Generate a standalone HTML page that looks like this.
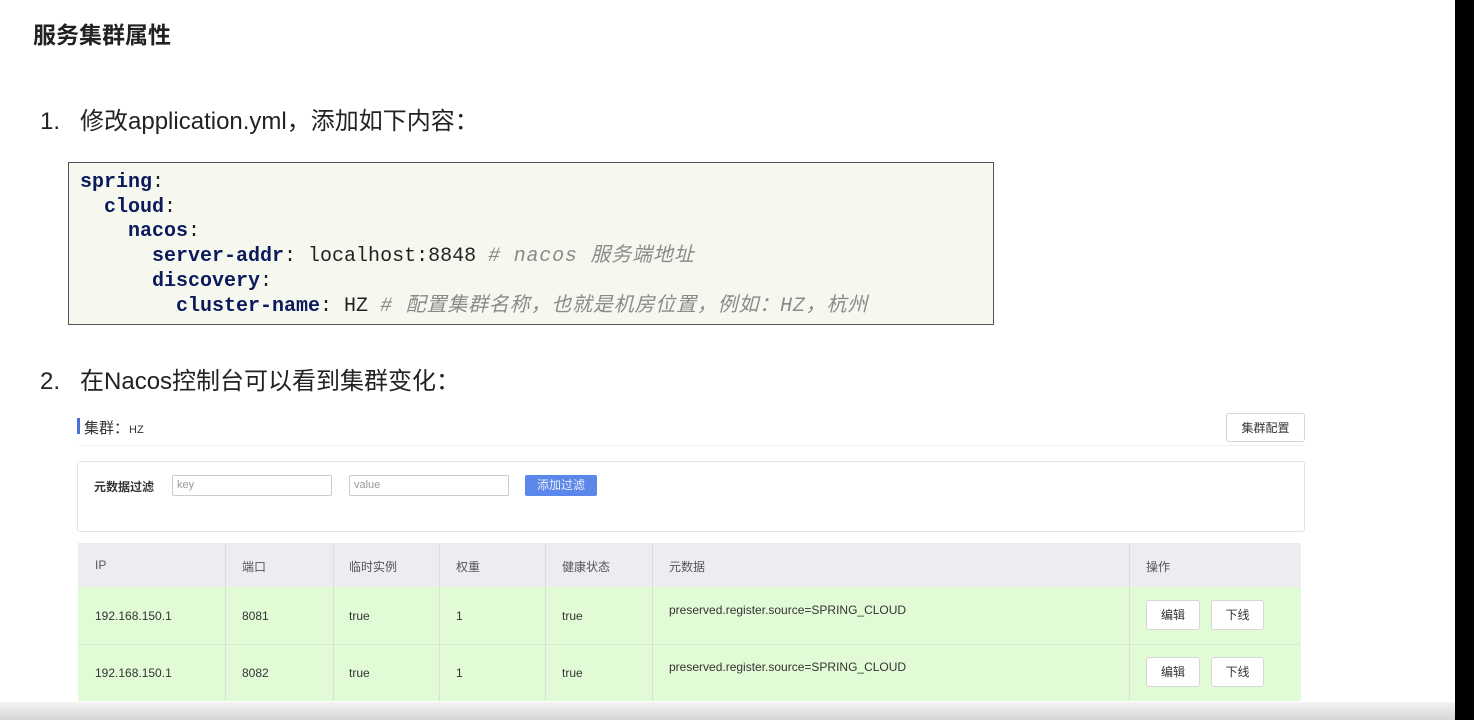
<!DOCTYPE html>
<html><head><meta charset="utf-8"><style>
*{margin:0;padding:0;box-sizing:border-box}
body{width:1474px;height:720px;background:#fff;position:relative;overflow:hidden;font-family:"Liberation Sans","Noto Sans CJK SC",sans-serif;color:#222}
.a{position:absolute;white-space:nowrap}
.code{position:absolute;left:68px;top:162px;width:926px;height:163px;background:#f6f8ef;border:1px solid #555}
.code div{position:absolute;left:11px;height:24px;line-height:24px;font-family:"Liberation Mono","Noto Sans CJK SC",monospace;font-size:20px;color:#222;white-space:pre}
.k{color:#0b1a5c;font-weight:bold}
.c{color:#8a8a8a;font-style:italic;font-size:20px;letter-spacing:0.8px}
.cell{position:absolute;font-size:12px;color:#333}
.btn{position:absolute;background:#fff;border:1px solid #d6d6d6;border-radius:3px;font-size:12px;color:#333;text-align:center}
</style></head><body>
<div class="a" style="left:33px;top:16px;font-size:23px;font-weight:bold;color:#222">服务集群属性</div>
<div class="a" style="left:40px;top:101px;font-size:24px;color:#222">1.&nbsp;&nbsp;&nbsp;修改application.yml，添加如下内容：</div>
<div class="code">
<div style="top:8px"><span class="k">spring</span>:</div>
<div style="top:33px">  <span class="k">cloud</span>:</div>
<div style="top:57px">    <span class="k">nacos</span>:</div>
<div style="top:82px">      <span class="k">server-addr</span>: localhost:8848 <span class="c"># nacos 服务端地址</span></div>
<div style="top:107px">      <span class="k">discovery</span>:</div>
<div style="top:132px">        <span class="k">cluster-name</span>: HZ <span class="c"># 配置集群名称，也就是机房位置，例如：HZ，杭州</span></div>
</div>
<div class="a" style="left:40px;top:361px;font-size:24px;color:#222">2.&nbsp;&nbsp;&nbsp;在Nacos控制台可以看到集群变化：</div>

<div class="a" style="left:77px;top:418px;width:3px;height:16px;background:#4a6fd8"></div>
<div class="a" style="left:84px;top:417px;font-size:15px;color:#333">集群：<span style="font-size:11px">HZ</span></div>
<div class="a" style="left:78px;top:445px;width:1226px;height:1px;background:#f0f0f0"></div>
<div class="btn" style="left:1226px;top:413px;width:79px;height:29px;line-height:28px">集群配置</div>

<div class="a" style="left:77px;top:461px;width:1228px;height:71px;border:1px solid #e3e3e3;border-radius:3px"></div>
<div class="a" style="left:94px;top:478px;font-size:12px;font-weight:bold;color:#333">元数据过滤</div>
<div class="a" style="left:172px;top:475px;width:160px;height:21px;border:1px solid #ccc;border-radius:2px;font-size:11px;color:#999;padding:3px 4px">key</div>
<div class="a" style="left:349px;top:475px;width:160px;height:21px;border:1px solid #ccc;border-radius:2px;font-size:11px;color:#999;padding:3px 4px">value</div>
<div class="a" style="left:525px;top:475px;width:72px;height:21px;background:#5b86ea;border-radius:2px;font-size:12px;color:#e8eefc;text-align:center;line-height:21px">添加过滤</div>

<div class="a" style="left:78px;top:543px;width:1223px;height:44px;background:#ebedf1"></div>
<div class="a" style="left:78px;top:587px;width:1223px;height:114px;background:#e2fbd7"></div>
<div class="a" style="left:78px;top:644px;width:1223px;height:1px;background:#d6ecd0"></div>
<div class="a" style="left:225px;top:543px;width:1px;height:158px;background:#dcdcdc"></div>
<div class="a" style="left:333px;top:543px;width:1px;height:158px;background:#dcdcdc"></div>
<div class="a" style="left:439px;top:543px;width:1px;height:158px;background:#dcdcdc"></div>
<div class="a" style="left:545px;top:543px;width:1px;height:158px;background:#dcdcdc"></div>
<div class="a" style="left:652px;top:543px;width:1px;height:158px;background:#dcdcdc"></div>
<div class="a" style="left:1129px;top:543px;width:1px;height:158px;background:#dcdcdc"></div>

<div class="cell" style="left:95px;top:558px;color:#555">IP</div>
<div class="cell" style="left:242px;top:558px;color:#555">端口</div>
<div class="cell" style="left:349px;top:558px;color:#555">临时实例</div>
<div class="cell" style="left:456px;top:558px;color:#555">权重</div>
<div class="cell" style="left:562px;top:558px;color:#555">健康状态</div>
<div class="cell" style="left:669px;top:558px;color:#555">元数据</div>
<div class="cell" style="left:1146px;top:558px;color:#555">操作</div>

<div class="cell" style="left:95px;top:609px">192.168.150.1</div>
<div class="cell" style="left:242px;top:609px">8081</div>
<div class="cell" style="left:349px;top:609px">true</div>
<div class="cell" style="left:456px;top:609px">1</div>
<div class="cell" style="left:562px;top:609px">true</div>
<div class="cell" style="left:669px;top:603px">preserved.register.source=SPRING_CLOUD</div>
<div class="btn" style="left:1146px;top:600px;width:54px;height:30px;line-height:29px">编辑</div>
<div class="btn" style="left:1211px;top:600px;width:53px;height:30px;line-height:29px">下线</div>

<div class="cell" style="left:95px;top:666px">192.168.150.1</div>
<div class="cell" style="left:242px;top:666px">8082</div>
<div class="cell" style="left:349px;top:666px">true</div>
<div class="cell" style="left:456px;top:666px">1</div>
<div class="cell" style="left:562px;top:666px">true</div>
<div class="cell" style="left:669px;top:660px">preserved.register.source=SPRING_CLOUD</div>
<div class="btn" style="left:1146px;top:657px;width:54px;height:30px;line-height:29px">编辑</div>
<div class="btn" style="left:1211px;top:657px;width:53px;height:30px;line-height:29px">下线</div>

<div class="a" style="left:0;top:702px;width:1474px;height:18px;background:linear-gradient(#f4f4f4,#d6d6d6)"></div>
<div class="a" style="left:1455px;top:0;width:19px;height:720px;background:#000"></div>
</body></html>
